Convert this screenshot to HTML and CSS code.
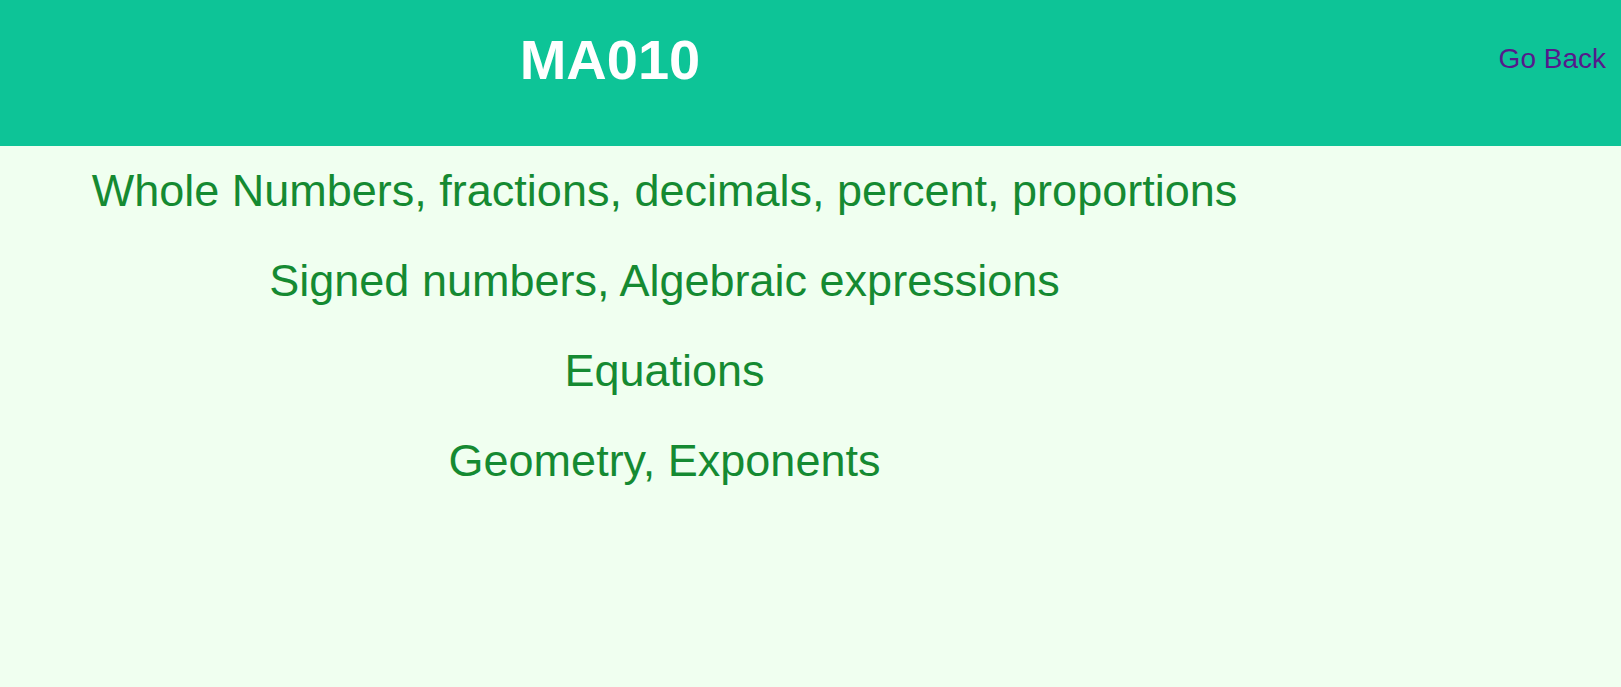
FILE: index.html
```html
<!DOCTYPE html>
<html>
<head>
<meta charset="utf-8">
<link rel="stylesheet" href="styles.css">
</head>
<body>
<header class="top">
  <h1 class="title">MA010</h1>
  <div class="nav"><a class="back" href="#">Go Back</a></div>
</header>
<main class="topics">
  <p class="topic">Whole Numbers, fractions, decimals, percent, proportions</p>
  <p class="topic">Signed numbers, Algebraic expressions</p>
  <p class="topic">Equations</p>
  <p class="topic">Geometry, Exponents</p>
</main>
</body>
</html>
```
FILE: styles.css
```css
html, body {
  margin: 0;
  padding: 0;
}
body {
  background: #f0fff0;
  font-family: "Liberation Sans", Arial, sans-serif;
  min-height: 687px;
}
.top {
  display: flex;
  height: 146px;
  background: #0dc497;
}
.title {
  flex: 0 0 75.26%;
  margin: 0;
  padding-top: 28px;
  text-align: center;
  font-size: 56px;
  line-height: 1.15;
  font-weight: bold;
  color: #ffffff;
}
.nav {
  flex: 1;
  padding-top: 43px;
  padding-right: 15px;
  text-align: right;
  font-size: 28px;
  line-height: 1.15;
}
.back {
  color: #551a8b;
  text-decoration: none;
}
.topics {
  width: 1329px;
  text-align: center;
}
.topic {
  margin: 0;
  font-size: 45px;
  line-height: 90px;
  color: #158a32;
}
```
